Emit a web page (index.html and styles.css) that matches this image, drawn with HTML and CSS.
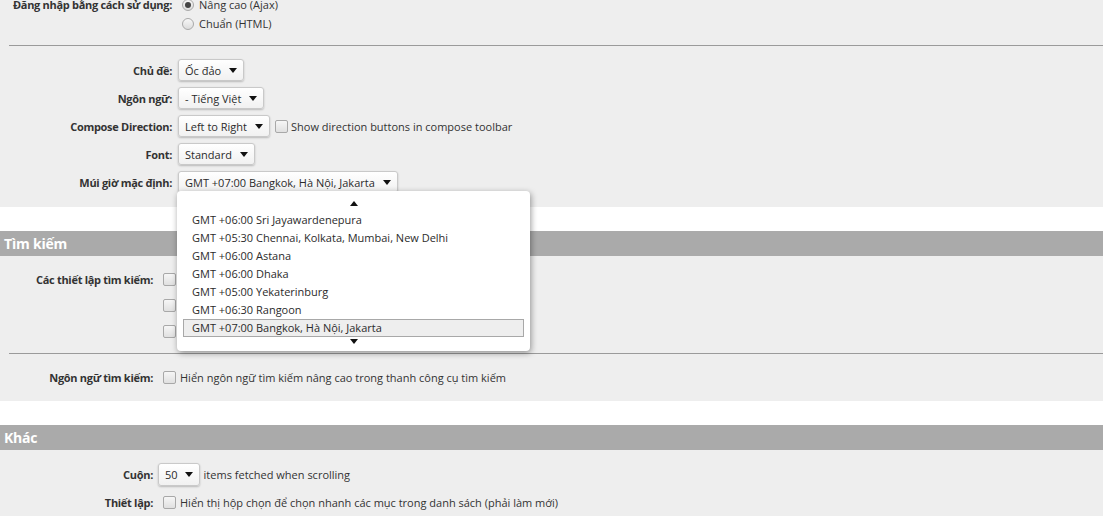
FILE: index.html
```html
<!DOCTYPE html>
<html lang="vi">
<head>
<meta charset="utf-8">
<title>Tùy chọn</title>
<link rel="stylesheet" href="styles.css">
</head>
<body>
<div class="page">
  <section class="panel panel-general">
    <div class="form wide">
      <div class="row row-radio first">
        <div class="label">Đăng nhập bằng cách sử dụng:</div>
        <div class="value"><span class="radio checked"></span><span class="text">Nâng cao (Ajax)</span></div>
      </div>
      <div class="row row-radio">
        <div class="label"></div>
        <div class="value"><span class="radio"></span><span class="text">Chuẩn (HTML)</span></div>
      </div>
    </div>
    <div class="sep"></div>
    <div class="form wide rows-select">
      <div class="row">
        <div class="label">Chủ đề:</div>
        <div class="value"><span class="select">Ốc đảo<i class="caret"></i></span></div>
      </div>
      <div class="row">
        <div class="label">Ngôn ngữ:</div>
        <div class="value"><span class="select">- Tiếng Việt<i class="caret"></i></span></div>
      </div>
      <div class="row">
        <div class="label">Compose Direction:</div>
        <div class="value"><span class="select">Left to Right<i class="caret"></i></span><span class="check after-select"></span><span class="text">Show direction buttons in compose toolbar</span></div>
      </div>
      <div class="row">
        <div class="label">Font:</div>
        <div class="value"><span class="select">Standard<i class="caret"></i></span></div>
      </div>
      <div class="row">
        <div class="label">Múi giờ mặc định:</div>
        <div class="value">
          <span class="select-wrap">
            <span class="select">GMT +07:00 Bangkok, Hà Nội, Jakarta<i class="caret"></i></span>
            <div class="menu">
              <div class="scroll up"><i class="tri-up"></i></div>
              <ul class="options">
                <li>GMT +06:00 Sri Jayawardenepura</li>
                <li>GMT +05:30 Chennai, Kolkata, Mumbai, New Delhi</li>
                <li>GMT +06:00 Astana</li>
                <li>GMT +06:00 Dhaka</li>
                <li>GMT +05:00 Yekaterinburg</li>
                <li>GMT +06:30 Rangoon</li>
                <li class="selected">GMT +07:00 Bangkok, Hà Nội, Jakarta</li>
              </ul>
              <div class="scroll down"><i class="tri-down"></i></div>
            </div>
          </span>
        </div>
      </div>
    </div>
  </section>

  <h2 class="heading">Tìm kiếm</h2>
  <section class="panel panel-search">
    <div class="form narrow rows-check">
      <div class="row">
        <div class="label">Các thiết lập tìm kiếm:</div>
        <div class="value"><span class="check"></span></div>
      </div>
      <div class="row">
        <div class="label"></div>
        <div class="value"><span class="check"></span></div>
      </div>
      <div class="row">
        <div class="label"></div>
        <div class="value"><span class="check"></span></div>
      </div>
    </div>
    <div class="sep"></div>
    <div class="form narrow">
      <div class="row row-line">
        <div class="label">Ngôn ngữ tìm kiếm:</div>
        <div class="value"><span class="check"></span><span class="text">Hiển ngôn ngữ tìm kiếm nâng cao trong thanh công cụ tìm kiếm</span></div>
      </div>
    </div>
  </section>

  <h2 class="heading">Khác</h2>
  <section class="panel panel-other">
    <div class="form narrow">
      <div class="row row-scroll">
        <div class="label">Cuộn:</div>
        <div class="value"><span class="select small">50<i class="caret"></i></span><span class="text after">items fetched when scrolling</span></div>
      </div>
      <div class="row row-line">
        <div class="label">Thiết lập:</div>
        <div class="value"><span class="check"></span><span class="text">Hiển thị hộp chọn để chọn nhanh các mục trong danh sách (phải làm mới)</span></div>
      </div>
    </div>
  </section>
</div>
</body>
</html>
```

FILE: styles.css
```css
* { box-sizing: border-box; }

html, body {
  margin: 0;
  padding: 0;
  background: #ffffff;
}

body {
  font-family: "Open Sans", "Noto Sans", "DejaVu Sans", sans-serif;
  font-size: 11px;
  color: #2b2b2b;
  overflow: hidden;
  height: 516px;
}

.page {
  display: flex;
  flex-direction: column;
}

.panel {
  background: #eeeeee;
}

.panel-general {
  padding-bottom: 14px;
}

.panel-search {
  padding-top: 10px;
  padding-bottom: 13px;
  margin-bottom: 24px;
}

.panel-other {
  padding-top: 13px;
  padding-bottom: 20px;
}

.heading {
  margin: 0;
  height: 25px;
  line-height: 25px;
  padding-left: 4px;
  background: #aaaaaa;
  color: #ffffff;
  font-size: 14px;
  font-weight: 700;
  letter-spacing: -0.2px;
}

.panel-general + .heading { margin-top: 24px; }

.form {
  display: flex;
  flex-direction: column;
}

.rows-select { gap: 6px; }

.row {
  display: grid;
  align-items: center;
  height: 22px;
}

.wide .row { grid-template-columns: 172px 1fr; column-gap: 6px; }
.narrow .row { grid-template-columns: 153px 1fr; column-gap: 5px; }

.row-radio { height: 19px; }
.row-radio.first { margin-top: -5px; }

.rows-check .row { height: 26px; }

.row-scroll { height: 23px; }
.row-line { margin-top: 5px; }
.rows-check + .sep + .form .row-line { margin-top: 0; }

.label {
  text-align: right;
  font-weight: 700;
  color: #333333;
  white-space: nowrap;
  letter-spacing: -0.3px;
}

.value {
  display: flex;
  align-items: center;
  white-space: nowrap;
}

.text { color: #333333; }

.sep {
  height: 1px;
  background: #9a9a9a;
  margin-left: 9px;
}

.panel-general .sep { margin-top: 12px; margin-bottom: 13px; }
.panel-search .sep { margin-top: 9px; margin-bottom: 12px; }

.radio {
  width: 12px;
  height: 12px;
  border-radius: 50%;
  border: 1px solid #a9a9a9;
  background: linear-gradient(#f7f7f7, #dcdcdc);
  margin-left: 4px;
  margin-right: 5px;
  position: relative;
}

.radio.checked::after {
  content: "";
  position: absolute;
  left: 2px;
  top: 2px;
  width: 6px;
  height: 6px;
  border-radius: 50%;
  background: #444444;
}

.check {
  width: 13px;
  height: 13px;
  border: 1px solid #a8a8a8;
  border-radius: 2px;
  background: linear-gradient(#f6f6f6, #e0e0e0);
  margin-left: 5px;
  margin-right: 4px;
  flex: none;
}

.check.after-select { margin-left: 5px; margin-right: 3px; }

.select {
  display: inline-flex;
  align-items: center;
  height: 22px;
  padding: 0 6px 0 6px;
  border: 1px solid #c9c9c9;
  border-radius: 3px;
  background: linear-gradient(#ffffff, #f1f1f1);
  box-shadow: 0 1px 2px rgba(0, 0, 0, 0.22);
  color: #2b2b2b;
}

.select.small { height: 23px; }

.caret {
  display: inline-block;
  width: 0;
  height: 0;
  border-left: 4px solid transparent;
  border-right: 4px solid transparent;
  border-top: 5px solid #111111;
  margin-left: 8px;
}

.select.small .caret { margin-left: 7px; }

.text.after { margin-left: 4px; }

.select-wrap {
  position: relative;
  display: inline-block;
}

.menu {
  position: absolute;
  left: -1px;
  top: 20px;
  width: 353px;
  height: 160px;
  background: #ffffff;
  border-radius: 4px;
  box-shadow: 1px 2px 6px rgba(0, 0, 0, 0.4);
  z-index: 10;
  display: flex;
  flex-direction: column;
}

.scroll {
  display: flex;
  justify-content: center;
  align-items: center;
}

.scroll.up { height: 20px; padding-top: 4px; }
.scroll.down { height: 8px; }

.tri-up {
  width: 0;
  height: 0;
  border-left: 4px solid transparent;
  border-right: 4px solid transparent;
  border-bottom: 5px solid #111111;
}

.tri-down {
  width: 0;
  height: 0;
  border-left: 4px solid transparent;
  border-right: 4px solid transparent;
  border-top: 5px solid #111111;
}

.options {
  list-style: none;
  margin: 0;
  padding: 0;
}

.options li {
  height: 18px;
  line-height: 16px;
  margin: 0 6px;
  padding: 0 8px;
  border: 1px solid transparent;
  color: #2b2b2b;
  white-space: nowrap;
}

.options li.selected {
  border-color: #a8a8a8;
  background: #eeeeee;
}
```
